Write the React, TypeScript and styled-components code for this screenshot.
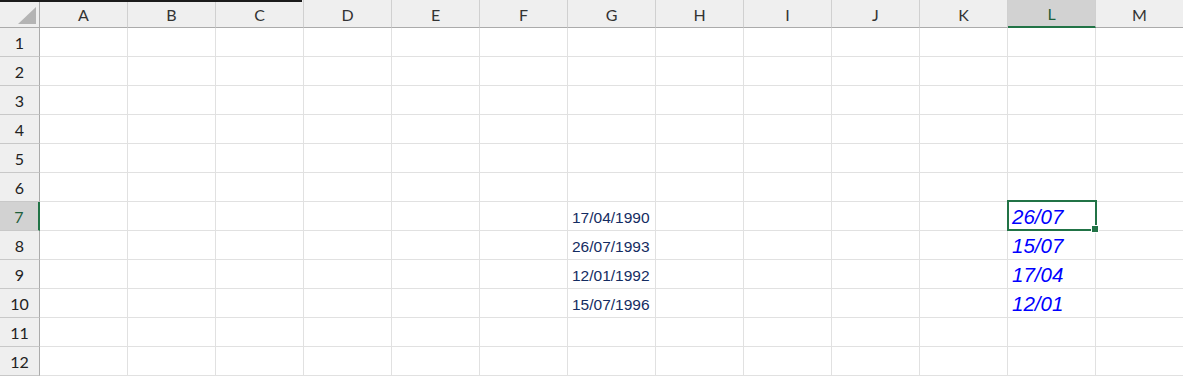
import styled, { createGlobalStyle } from "styled-components"

const GlobalStyle = createGlobalStyle`
    html, body {
        margin: 0;
        padding: 0;
        background: #ffffff;
        overflow: hidden;
    }
`

const COLS = ["A", "B", "C", "D", "E", "F", "G", "H", "I", "J", "K", "L", "M"]
const ROWS = [1, 2, 3, 4, 5, 6, 7, 8, 9, 10, 11, 12]
const ACTIVE_COL = "L"
const ACTIVE_ROW = 7

const cells: Record<string, { text: string; accent?: boolean }> = {
    G7: { text: "17/04/1990" },
    G8: { text: "26/07/1993" },
    G9: { text: "12/01/1992" },
    G10: { text: "15/07/1996" },
    L7: { text: "26/07", accent: true },
    L8: { text: "15/07", accent: true },
    L9: { text: "17/04", accent: true },
    L10: { text: "12/01", accent: true },
}

const Sheet = styled.div`
    position: relative;
    width: 1183px;
    height: 377px;
    overflow: hidden;
    background: #fff;
`
const TopEdge = styled.div`
    position: absolute;
    top: 0;
    left: 0;
    width: 302px;
    height: 2px;
    background: #1b1b1b;
    z-index: 3;
`
const Grid = styled.div`
    display: grid;
    grid-template-columns: 40px repeat(13, 88px);
    grid-template-rows: 28px repeat(12, 29px);
`
const Corner = styled.div`
    background: #efefef;
    border-right: 1px solid #ababab;
    border-bottom: 1px solid #ababab;
    display: flex;
    align-items: flex-end;
    justify-content: flex-end;
    padding: 0 3px 3px 0;
`
const ColHead = styled.div<{ $active?: boolean }>`
    background: ${p => (p.$active ? "#d2d2d2" : "#efefef")};
    border-right: 1px solid #d0d0d0;
    border-bottom: ${p => (p.$active ? "2px solid #217346" : "1px solid #ababab")};
    display: flex;
    align-items: center;
    justify-content: center;
    padding-top: 1px;
    font-family: "Lato", "Noto Sans", sans-serif;
    font-size: 16px;
    color: ${p => (p.$active ? "#1e5f3b" : "#333")};
`
const RowHead = styled.div<{ $active?: boolean }>`
    background: ${p => (p.$active ? "#d2d2d2" : "#efefef")};
    border-right: ${p => (p.$active ? "2px solid #217346" : "1px solid #ababab")};
    border-bottom: 1px solid #c8c8c8;
    display: flex;
    align-items: center;
    justify-content: center;
    font-family: "Lato", "Noto Sans", sans-serif;
    font-size: 16px;
    color: ${p => (p.$active ? "#1e5f3b" : "#222")};
`
const Cell = styled.div<{ $accent?: boolean }>`
    position: relative;
    border-right: 1px solid #e1e1e1;
    border-bottom: 1px solid #e1e1e1;
    display: flex;
    align-items: flex-end;
    padding: 0 0 ${p => (p.$accent ? "3px 4px" : "5px 4px")};
    font-family: "Liberation Sans", Arial, sans-serif;
    font-size: ${p => (p.$accent ? "20.5px" : "15.5px")};
    font-style: ${p => (p.$accent ? "italic" : "normal")};
    line-height: 1;
    color: ${p => (p.$accent ? "#0000ff" : "#142c62")};
    white-space: nowrap;
`
const Selection = styled.div`
    position: absolute;
    top: -2px;
    left: -1px;
    right: -2px;
    bottom: -1px;
    border: 2px solid #217346;
    pointer-events: none;
    z-index: 2;
`
const FillHandle = styled.div`
    position: absolute;
    right: -4px;
    bottom: -4px;
    width: 6px;
    height: 6px;
    background: #217346;
    border: 1px solid #fff;
`

function CornerMark() {
    return (
        <svg width="18" height="17" viewBox="0 0 18 17">
            <polygon points="18,0 18,17 0,17" fill="#b4b4b4" />
        </svg>
    )
}

export default function App() {
    return (
        <Sheet>
            <GlobalStyle />
            <TopEdge />
            <Grid>
                <Corner>
                    <CornerMark />
                </Corner>
                {COLS.map(c => (
                    <ColHead key={c} $active={c === ACTIVE_COL}>{c}</ColHead>
                ))}
                {ROWS.map(r => [
                    <RowHead key={"h" + r} $active={r === ACTIVE_ROW}>{r}</RowHead>,
                    ...COLS.map(c => {
                        const data = cells[c + r]
                        const selected = c === ACTIVE_COL && r === ACTIVE_ROW
                        return (
                            <Cell key={c + r} $accent={data?.accent}>
                                {data?.text}
                                {selected && (
                                    <Selection>
                                        <FillHandle />
                                    </Selection>
                                )}
                            </Cell>
                        )
                    }),
                ])}
            </Grid>
        </Sheet>
    )
}
